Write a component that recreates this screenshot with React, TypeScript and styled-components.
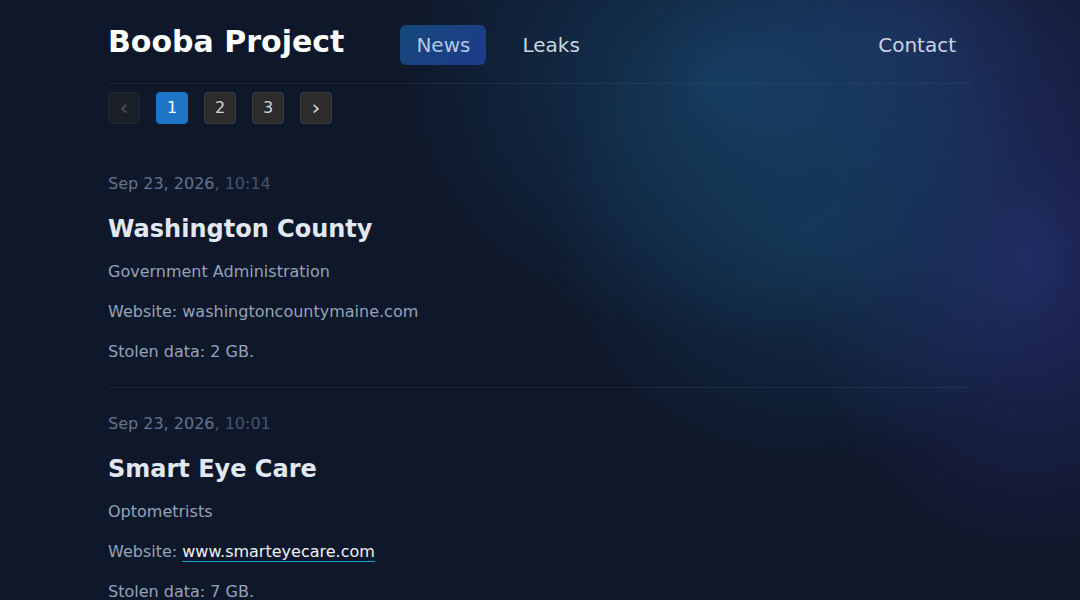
import * as React from 'react';
import styled, {createGlobalStyle} from 'styled-components';

const GlobalStyle = createGlobalStyle`
    html, body {
        margin: 0;
        padding: 0;
    }
    body {
        font-family: "DejaVu Sans", "Noto Sans", sans-serif;
        background: #0f172a;
        color: #94a3b8;
    }
`;

type Post = {
    date: string;
    time: string;
    title: string;
    sector: string;
    website: string;
    linked?: boolean;
    size: string;
};

const posts: Post[] = [
    {
        date: 'Sep 23, 2026',
        time: ', 10:14',
        title: 'Washington County',
        sector: 'Government Administration',
        website: 'washingtoncountymaine.com',
        size: '2 GB.',
    },
    {
        date: 'Sep 23, 2026',
        time: ', 10:01',
        title: 'Smart Eye Care',
        sector: 'Optometrists',
        website: 'www.smarteyecare.com',
        linked: true,
        size: '7 GB.',
    },
];

export const App = () => {
    return <Page>
        <GlobalStyle/>
        <Container>
            <Header>
                <Brand>Booba Project</Brand>
                <Nav>
                    <NavLink $active>News</NavLink>
                    <NavLink>Leaks</NavLink>
                </Nav>
                <NavLink>Contact</NavLink>
            </Header>

            <Pagination>
                <PageButton $variant="disabled" $arrow>‹</PageButton>
                <PageButton $variant="active">1</PageButton>
                <PageButton>2</PageButton>
                <PageButton>3</PageButton>
                <PageButton $arrow>›</PageButton>
            </Pagination>

            <PostList>
                {posts.map(post => (
                    <Article key={post.title}>
                        <DateLine>{post.date}<Time>{post.time}</Time></DateLine>
                        <Title>{post.title}</Title>
                        <Text>{post.sector}</Text>
                        <Text>
                            Website: {post.linked ? <Link>{post.website}</Link> : post.website}
                        </Text>
                        <Text>Stolen data: {post.size}</Text>
                    </Article>
                ))}
            </PostList>
        </Container>
    </Page>
}

export default App;

// soft teal + indigo glows on the right side
const Page = styled.div`
    min-height: 100vh;
    overflow: hidden;
    background:
        radial-gradient(ellipse 320px 260px at 720px 80px, rgba(24, 82, 124, 0.55), transparent),
        radial-gradient(ellipse 260px 240px at 810px 230px, rgba(24, 82, 124, 0.45), transparent),
        radial-gradient(ellipse 260px 170px at 900px 30px, rgba(38, 54, 116, 0.55), transparent),
        radial-gradient(ellipse 230px 300px at 1030px 260px, rgba(38, 48, 116, 0.75), transparent),
        #0f172a;
`;

const Container = styled.div`
    max-width: 864px;
    margin: 0 auto;
`;

const Header = styled.header`
    display: flex;
    align-items: center;
    padding: 25px 0 18px;
    border-bottom: 1px solid rgba(148, 163, 184, 0.1);
`;

const Brand = styled.h1`
    align-self: flex-start;
    margin: 0 56px 0 0;
    font-size: 30px;
    line-height: 33px;
    font-weight: 700;
    color: #ffffff;
`;

const Nav = styled.nav`
    display: flex;
    gap: 20px;
    flex: 1;
`;

const NavLink = styled.a<{ $active?: boolean }>`
    display: flex;
    align-items: center;
    height: 40px;
    padding: 0 16px;
    border-radius: 6px;
    font-size: 20px;
    color: ${p => p.$active ? '#b6c8e2' : '#cbd5e1'};
    background: ${p => p.$active ? 'linear-gradient(135deg, #14497a, #1e3a8a)' : 'transparent'};
    cursor: pointer;
`;

const Pagination = styled.div`
    display: flex;
    gap: 16px;
    margin-top: 8px;
`;

const PageButton = styled.button<{ $variant?: 'active' | 'disabled'; $arrow?: boolean }>`
    width: 32px;
    height: 32px;
    padding: 0;
    border-radius: 4px;
    font-family: inherit;
    font-size: ${p => p.$arrow ? '22px' : '16px'};
    line-height: 1;
    border: 1px solid ${p => p.$variant === 'active' ? '#1d74c5' : p.$variant === 'disabled' ? '#262931' : '#3d3d3f'};
    background: ${p => p.$variant === 'active' ? '#1d74c5' : p.$variant === 'disabled' ? '#1b1f28' : '#2c2c2d'};
    color: ${p => p.$variant === 'active' ? '#ffffff' : p.$variant === 'disabled' ? '#4b5563' : '#d1d5db'};
`;

const PostList = styled.div`
    margin-top: 24px;
`;

const Article = styled.article`
    padding: 24px 0 23px;
    border-bottom: 1px solid rgba(148, 163, 184, 0.1);
`;

const DateLine = styled.div`
    font-size: 16px;
    line-height: 24px;
    color: #64748b;
`;

const Time = styled.span`
    color: #475569;
`;

const Title = styled.h2`
    margin: 16px 0 0;
    font-size: 24px;
    line-height: 34px;
    font-weight: 700;
    color: #e2e8f0;
`;

const Text = styled.p`
    margin: 14px 0 0;
    font-size: 16px;
    line-height: 24px;
    color: #94a3b8;

    & + & {
        margin-top: 16px;
    }
`;

const Link = styled.a`
    color: #eef2f7;
    border-bottom: 1px solid #0ea5c6;
    cursor: pointer;
`;
